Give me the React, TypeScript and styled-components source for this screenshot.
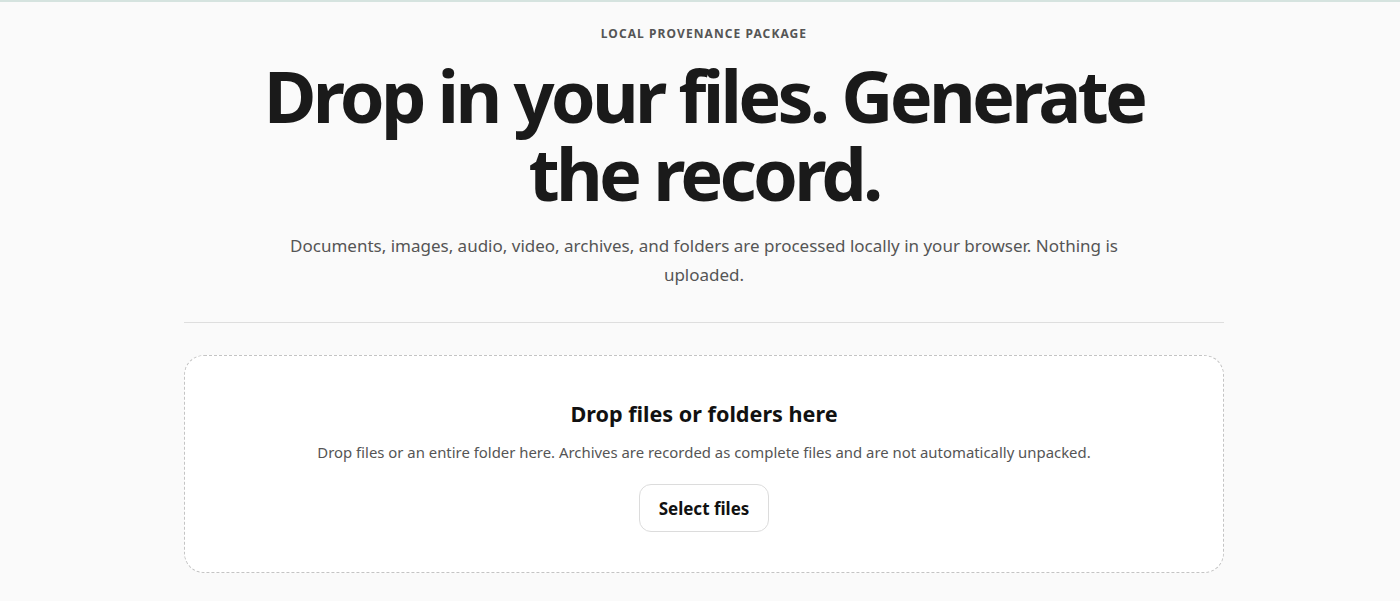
import React from "react";
import styled, { createGlobalStyle } from "styled-components";

const GlobalStyle = createGlobalStyle`
  * {
    box-sizing: border-box;
  }
  html, body {
    margin: 0;
    padding: 0;
    background: #fafafa;
    font-family: "Noto Sans", "Open Sans", Arial, sans-serif;
    color: #161616;
  }
`;

const App = () => {
  return (
    <>
      <GlobalStyle />
      <Page>
        <Hero>
          <Eyebrow>Local provenance package</Eyebrow>
          <Title>Drop in your files. Generate the record.</Title>
          <Lead>
            Documents, images, audio, video, archives, and folders are processed
            locally in your browser. Nothing is uploaded.
          </Lead>
        </Hero>
        <Divider />
        <DropZone>
          <DropTitle>Drop files or folders here</DropTitle>
          <DropText>
            Drop files or an entire folder here. Archives are recorded as
            complete files and are not automatically unpacked.
          </DropText>
          <SelectButton type="button">Select files</SelectButton>
        </DropZone>
      </Page>
    </>
  );
};

export default App;

const Page = styled.div`
  min-height: 100vh;
  border-top: 2px solid #d5e3df;
  padding: 24px 0 0 8px;
  width: 100%;
  display: flex;
  flex-direction: column;
  align-items: center;
`;

const Hero = styled.header`
  display: flex;
  flex-direction: column;
  align-items: center;
  text-align: center;
  width: 1040px;
`;

const Eyebrow = styled.div`
  font-size: 12px;
  font-weight: 700;
  letter-spacing: 0.09em;
  text-transform: uppercase;
  color: #555;
  line-height: 16px;
`;

const Title = styled.h1`
  margin: 14px 0 0;
  max-width: 1000px;
  font-size: 72px;
  line-height: 78px;
  font-weight: 700;
  letter-spacing: -0.052em;
  color: #1a1a1a;
`;

const Lead = styled.p`
  margin: 19px 0 0;
  max-width: 860px;
  font-size: 17px;
  line-height: 29px;
  color: #555;
`;

const Divider = styled.hr`
  width: 1040px;
  margin: 33px 0 0;
  border: 0;
  border-top: 1px solid #dedede;
`;

const DropZone = styled.section`
  width: 1040px;
  margin-top: 32px;
  padding: 44px 24px 40px;
  border: 1px dashed #c4c4c4;
  border-radius: 20px;
  background: #ffffff;
  display: flex;
  flex-direction: column;
  align-items: center;
  text-align: center;
`;

const DropTitle = styled.h2`
  margin: 0;
  font-size: 21.6px;
  line-height: 28px;
  font-weight: 700;
  color: #111;
`;

const DropText = styled.p`
  margin: 12px 0 0;
  font-size: 14.9px;
  line-height: 24px;
  color: #555;
`;

const SelectButton = styled.button`
  margin-top: 20px;
  height: 48px;
  padding: 0 19px;
  border: 1px solid #dcdcdc;
  border-radius: 12px;
  background: #ffffff;
  font-family: inherit;
  font-size: 17px;
  font-weight: 700;
  color: #111;
  cursor: pointer;
`;
